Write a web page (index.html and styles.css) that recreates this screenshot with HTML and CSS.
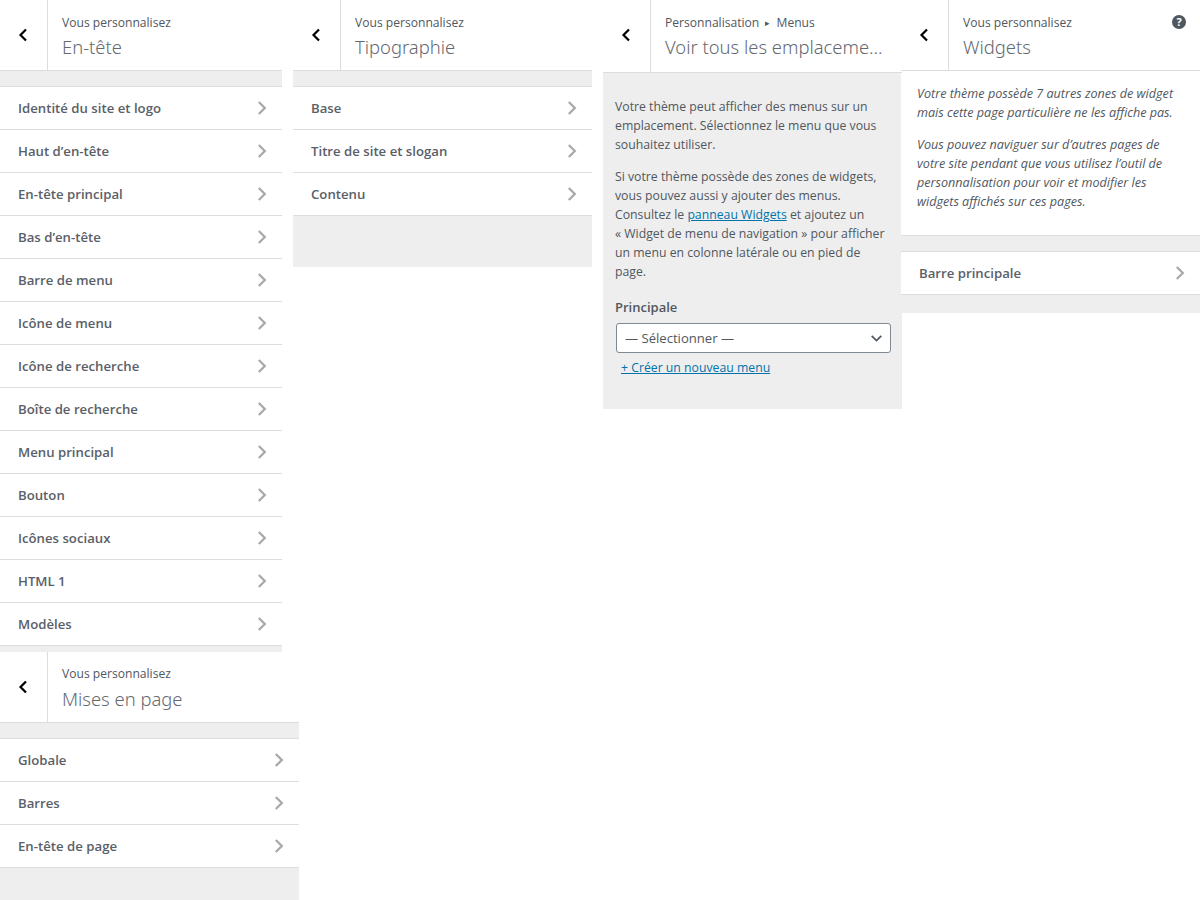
FILE: index.html
```html
<!DOCTYPE html>
<html lang="fr">
<head>
    <meta charset="UTF-8">
    <meta name="viewport" content="width=device-width, initial-scale=1.0">
    <title>Personnalisation</title>
    <link rel="stylesheet" href="styles.css">
</head>
<body>
    <svg class="icon-defs" width="0" height="0">
        <symbol id="back" viewBox="0 0 10 14"><path d="M8 1.500 2.500 7 8 12.500" fill="none" stroke="currentColor" stroke-width="2.200"/></symbol>
        <symbol id="next" viewBox="0 0 10 16"><path d="M1.800 2 7.800 8 1.800 14" fill="none" stroke="currentColor" stroke-width="2.300"/></symbol>
    </svg>
    <div class="sheet">
        <section class="panel panel-header">
            <header class="head">
                <button class="back"><svg width="10" height="14"><use href="#back"/></svg></button>
                <div class="head-text"><span class="crumb">Vous personnalisez</span><h2>En-tête</h2></div>
            </header>
            <ul class="list">
                <li>Identité du site et logo<svg width="10" height="16"><use href="#next"/></svg></li>
                <li>Haut d’en-tête<svg width="10" height="16"><use href="#next"/></svg></li>
                <li>En-tête principal<svg width="10" height="16"><use href="#next"/></svg></li>
                <li>Bas d’en-tête<svg width="10" height="16"><use href="#next"/></svg></li>
                <li>Barre de menu<svg width="10" height="16"><use href="#next"/></svg></li>
                <li>Icône de menu<svg width="10" height="16"><use href="#next"/></svg></li>
                <li>Icône de recherche<svg width="10" height="16"><use href="#next"/></svg></li>
                <li>Boîte de recherche<svg width="10" height="16"><use href="#next"/></svg></li>
                <li>Menu principal<svg width="10" height="16"><use href="#next"/></svg></li>
                <li>Bouton<svg width="10" height="16"><use href="#next"/></svg></li>
                <li>Icônes sociaux<svg width="10" height="16"><use href="#next"/></svg></li>
                <li>HTML 1<svg width="10" height="16"><use href="#next"/></svg></li>
                <li>Modèles<svg width="10" height="16"><use href="#next"/></svg></li>
            </ul>
        </section>

        <section class="panel panel-type">
            <header class="head">
                <button class="back"><svg width="10" height="14"><use href="#back"/></svg></button>
                <div class="head-text"><span class="crumb">Vous personnalisez</span><h2>Tipographie</h2></div>
            </header>
            <ul class="list">
                <li>Base<svg width="10" height="16"><use href="#next"/></svg></li>
                <li>Titre de site et slogan<svg width="10" height="16"><use href="#next"/></svg></li>
                <li>Contenu<svg width="10" height="16"><use href="#next"/></svg></li>
            </ul>
        </section>

        <section class="panel panel-menus">
            <header class="head">
                <button class="back"><svg width="10" height="14"><use href="#back"/></svg></button>
                <div class="head-text"><span class="crumb">Personnalisation <i class="sep">▸</i> Menus</span><h2>Voir tous les emplaceme...</h2></div>
            </header>
            <div class="menus-body">
                <p>Votre thème peut afficher des menus sur un emplacement. Sélectionnez le menu que vous souhaitez utiliser.</p>
                <p>Si votre thème possède des zones de widgets, vous pouvez aussi y ajouter des menus. Consultez le <a href="#">panneau Widgets</a> et ajoutez un «&nbsp;Widget de menu de navigation&nbsp;» pour afficher un menu en colonne latérale ou en pied de page.</p>
                <label class="field-label">Principale</label>
                <div class="select">— Sélectionner —<svg width="11" height="7" viewBox="0 0 11 7"><path d="M.7.8 5.500 5.500 10.300.8" fill="none" stroke="#50575e" stroke-width="1.700"/></svg></div>
                <a class="new-menu" href="#">+ Créer un nouveau menu</a>
            </div>
        </section>

        <section class="panel panel-widgets">
            <header class="head">
                <button class="back"><svg width="10" height="14"><use href="#back"/></svg></button>
                <div class="head-text"><span class="crumb">Vous personnalisez</span><h2>Widgets</h2></div>
                <span class="help">?</span>
            </header>
            <div class="notice">
                <p>Votre thème possède 7 autres zones de widget mais cette page particulière ne les affiche pas.</p>
                <p>Vous pouvez naviguer sur d’autres pages de votre site pendant que vous utilisez l’outil de personnalisation pour voir et modifier les widgets affichés sur ces pages.</p>
            </div>
            <ul class="list">
                <li>Barre principale<svg width="10" height="16"><use href="#next"/></svg></li>
            </ul>
        </section>

        <section class="panel panel-layout">
            <header class="head">
                <button class="back"><svg width="10" height="14"><use href="#back"/></svg></button>
                <div class="head-text"><span class="crumb">Vous personnalisez</span><h2>Mises en page</h2></div>
            </header>
            <ul class="list">
                <li>Globale<svg width="10" height="16"><use href="#next"/></svg></li>
                <li>Barres<svg width="10" height="16"><use href="#next"/></svg></li>
                <li>En-tête de page<svg width="10" height="16"><use href="#next"/></svg></li>
            </ul>
        </section>
    </div>
</body>
</html>
```

FILE: styles.css
```css
* {
    box-sizing: border-box;
}
html, body {
    margin: 0;
    height: 900px;
    overflow: hidden;
}
body {
    font-family: "Open Sans", "Noto Sans", sans-serif;
    font-size: 12.25px;
    line-height: 19px;
    color: #50575e;
    background-color: #fff;
}
.icon-defs {
    position: absolute;
}
.sheet {
    display: grid;
    grid-template-columns: 293px 310px 298px 299px;
    grid-template-rows: 652px 248px;
}
.panel {
    background-color: #eee;
}
.panel-header {
    width: 282px;
}
.panel-type {
    width: 299px;
    height: 267px;
}
.panel-menus {
    width: 299px;
    height: 409px;
}
.panel-widgets {
    height: 313px;
}
.panel-layout {
    grid-column: 1;
    width: 299px;
    height: 248px;
}
.head {
    display: flex;
    height: 71px;
    background-color: #fff;
    border-bottom: 1px solid #ddd;
    position: relative;
}
.panel-menus .head {
    height: 73px;
}
.back {
    width: 48px;
    padding: 28px 1px 0 0;
    border: none;
    border-right: 1px solid #ddd;
    background-color: #fff;
    color: #000;
    display: flex;
    justify-content: center;
}
.head-text {
    padding: 13px 0 0 14px;
    min-width: 0;
}
.panel-layout .head-text {
    padding-top: 12px;
}
.crumb {
    display: block;
    line-height: 19px;
    font-size: 12.1px;
}
.sep {
    font-style: normal;
    font-size: 9px;
    margin: 0 3px;
    vertical-align: 1px;
}
.head h2 {
    margin: 2px 0 0;
    font-family: "Noto Sans", "Open Sans", sans-serif;
    font-size: 18.4px;
    line-height: 26px;
    font-weight: 300;
    white-space: nowrap;
    color: #646970;
}
.panel-layout .head-text h2 {
    margin-top: 3px;
}
.help {
    position: absolute;
    right: 14px;
    top: 15px;
    width: 14px;
    height: 14px;
    border-radius: 50%;
    background-color: #50575e;
    color: #fff;
    font-size: 11px;
    font-weight: 700;
    line-height: 14px;
    text-align: center;
}
.list {
    list-style: none;
    margin: 15px 0 0;
    padding: 0;
    background-color: #fff;
    border-top: 1px solid #ddd;
}
.list li {
    display: flex;
    justify-content: space-between;
    align-items: center;
    height: 43px;
    padding: 0 15px 0 18px;
    font-size: 13.2px;
    font-weight: 600;
    color: #5a6067;
    border-bottom: 1px solid #ddd;
}
.list svg {
    color: #a7aaad;
}
.menus-body {
    padding: 24px 12px 0;
}
.menus-body p {
    margin: 0 0 13px;
}
.menus-body a {
    color: #0073aa;
}
.field-label {
    display: block;
    font-weight: 600;
    font-size: 13px;
    margin-top: 17px;
}
.select {
    display: flex;
    justify-content: space-between;
    align-items: center;
    width: 275px;
    height: 30px;
    margin: 6px 0 0 1px;
    padding: 0 8px 0 8px;
    background-color: #fff;
    border: 1px solid #7e8993;
    border-radius: 3px;
    font-size: 13.1px;
}
.new-menu {
    display: inline-block;
    margin: 5px 0 0 6px;
}
.notice {
    background-color: #fff;
    padding: 13px 16px 24px 16px;
    font-size: 12.6px;
    font-style: italic;
    border-bottom: 1px solid #ddd;
}
.notice p {
    margin: 0 0 13px;
}
.notice p:last-child {
    margin-bottom: 0;
}
```
